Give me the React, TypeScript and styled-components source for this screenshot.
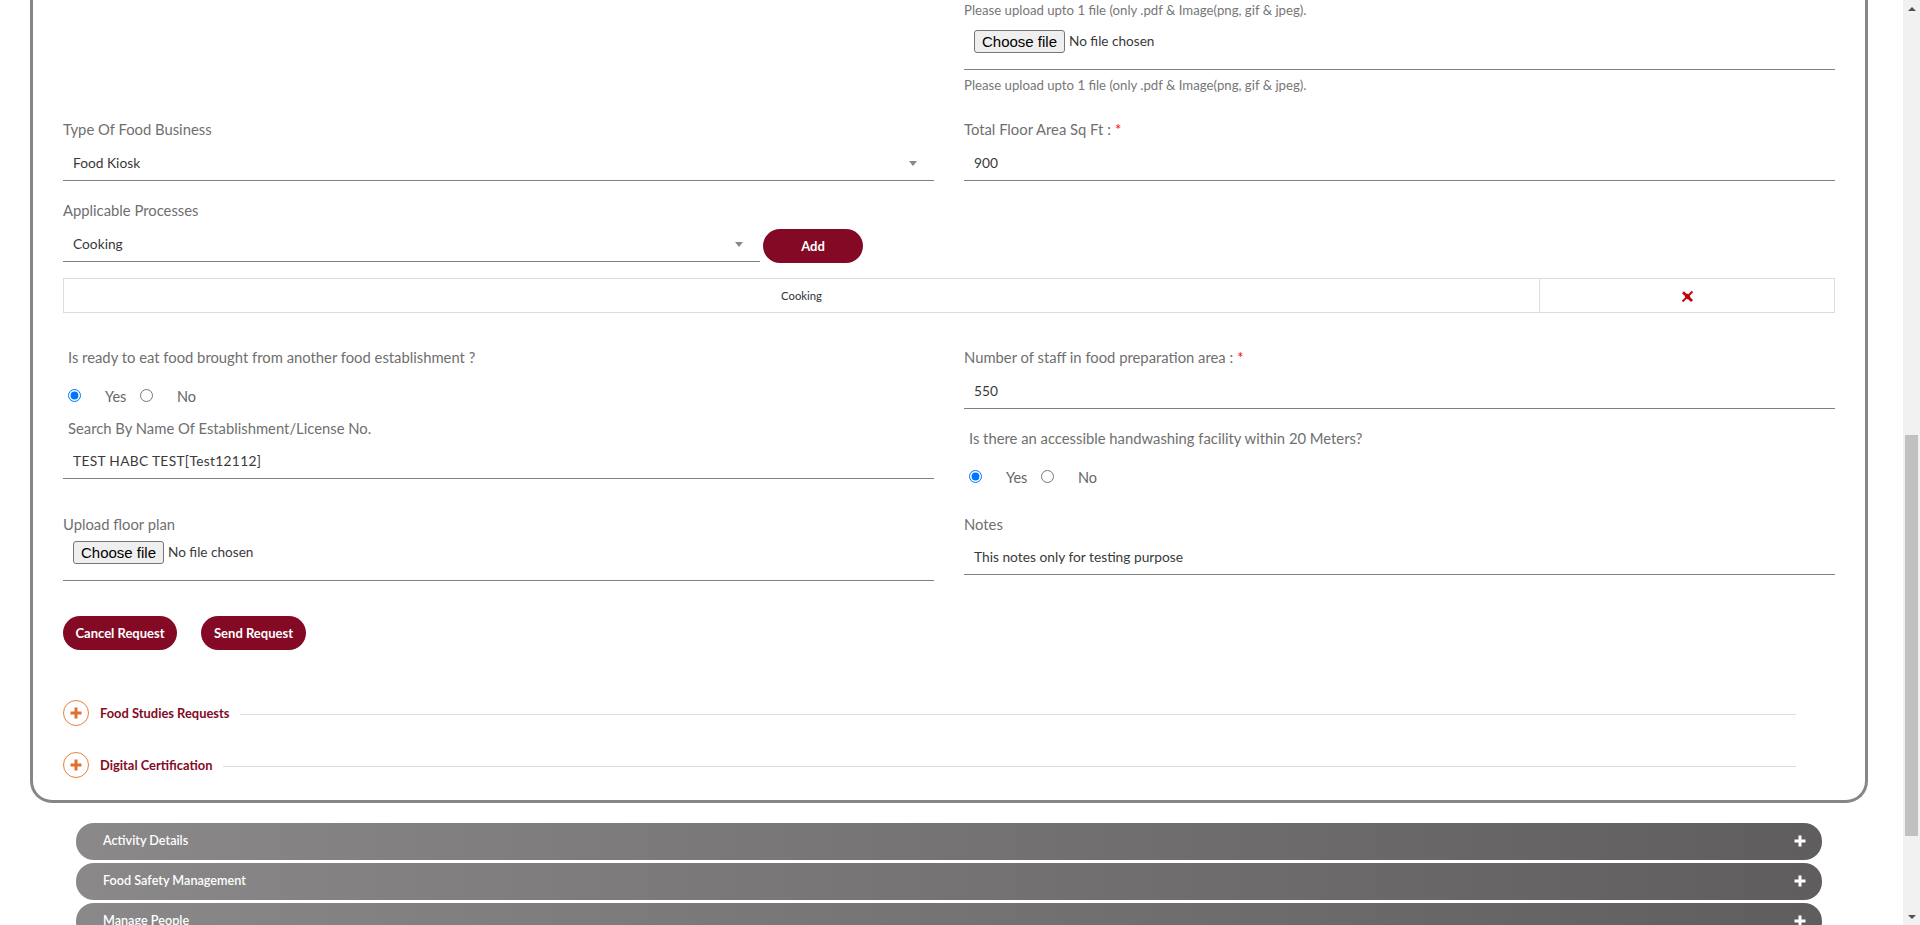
import React from "react";
import styled, { createGlobalStyle, css } from "styled-components";

const Global = createGlobalStyle`
  html, body { margin: 0; padding: 0; height: 925px; overflow: hidden; background: #fff; }
  * { box-sizing: border-box; }
  body { font-family: Lato, "Open Sans", sans-serif; font-size: 14px; }
`;

const Page = styled.div`
  display: flex;
  width: 1920px;
  height: 925px;
  overflow: hidden;
`;
const Content = styled.main`
  width: 1903px;
  height: 925px;
  overflow: hidden;
`;
const Scrollbar = styled.aside`
  width: 17px;
  height: 925px;
  background: #f1f1f1;
  display: flex;
  flex-direction: column;
  align-items: center;
  padding: 7px 0 6px;
`;
const ArrowUp = styled.span`
  width: 0; height: 0;
  border-left: 4px solid transparent;
  border-right: 4px solid transparent;
  border-bottom: 4px solid #505050;
`;
const ArrowDown = styled.span`
  width: 0; height: 0;
  border-left: 4px solid transparent;
  border-right: 4px solid transparent;
  border-top: 4px solid #505050;
`;
const Thumb = styled.span`
  width: 13px;
  height: 401px;
  margin: 424px 0 auto;
  background: #c1c1c1;
`;

const Panel = styled.section`
  margin: 0 35px 0 30px;
  height: 803px;
  border: 3px solid #868686;
  border-top: none;
  border-radius: 0 0 22px 22px;
  padding: 0 15px;
`;
const Row = styled.div<{ $top?: number }>`
  display: flex;
  margin-top: ${(p) => p.$top ?? 0}px;
`;
const Col = styled.div`
  width: 901px;
  padding: 0 15px;
`;
const Hint = styled.div<{ $top?: number }>`
  height: 20px;
  line-height: 20px;
  margin-top: ${(p) => p.$top ?? 0}px;
  font-size: 13.2px;
  color: #777;
`;
const Label = styled.label<{ $top?: number; $inset?: boolean; $nudge?: boolean }>`
  display: block;
  height: 20px;
  line-height: 19px;
  margin-top: ${(p) => p.$top ?? 0}px;
  margin-bottom: 1px;
  padding-top: ${(p) => (p.$nudge ? 1 : 0)}px;
  padding-left: ${(p) => (p.$inset ? 5 : 0)}px;
  font-size: 14.8px;
  color: #6f6f6f;
`;
const Required = styled.span`
  color: #f00;
  margin-left: 4px;
`;
const Control = styled.div<{ $track?: number }>`
  display: flex;
  justify-content: space-between;
  height: 40px;
  padding: 5px 17px 0 10px;
  line-height: 34px;
  font-size: 13.75px;
  letter-spacing: ${(p) => p.$track ?? 0}px;
  color: #3a3a3a;
  border-bottom: 1px solid #808080;
`;
const Caret = styled.span`
  width: 0; height: 0;
  margin-top: 15px;
  border-left: 4.5px solid transparent;
  border-right: 4.5px solid transparent;
  border-top: 5px solid #888;
`;
const SelectLine = styled.div`
  display: flex;
  gap: 3px;
  align-items: flex-start;
  padding-right: 71px;
`;
const Grow = styled.div`
  flex: 1;
`;
const Solid = styled.button<{ $w: number }>`
  width: ${(p) => p.$w}px;
  height: 34px;
  border: none;
  border-radius: 17px;
  padding: 0;
  background: #840924;
  color: #fff;
  font-family: Lato, sans-serif;
  font-size: 13px;
  font-weight: 700;
`;
const AddBtn = styled(Solid)`
  margin-top: 7px;
`;
const FileBox = styled.div<{ $h: number; $top: number }>`
  display: flex;
  align-items: flex-start;
  height: ${(p) => p.$h}px;
  padding: ${(p) => p.$top}px 0 0 10px;
  border-bottom: 1px solid #808080;
`;
const FileButton = styled.button`
  width: 91px;
  height: 23px;
  padding: 0;
  background: #efefef;
  border: 1px solid #767676;
  border-radius: 3px;
  color: #000;
  font-family: "Liberation Sans", Arial, sans-serif;
  font-size: 15px;
  line-height: 20px;
`;
const FileName = styled.span`
  margin-left: 4px;
  line-height: 23px;
  font-size: 13.6px;
  color: #3a3a3a;
`;
const TableWrap = styled.div`
  padding: 0 15px;
  margin-top: 15px;
`;
const Table = styled.table`
  width: 100%;
  height: 35px;
  border-collapse: collapse;
  table-layout: fixed;
`;
const Cell = styled.td<{ $w?: number }>`
  ${(p) => p.$w && css`width: ${p.$w}px;`}
  padding: 0;
  border: 1px solid #ddd;
  text-align: center;
  font-size: 11.3px;
  color: #333;
`;
const RemoveIcon = styled.svg`
  display: block;
  margin: 2px auto 0;
`;
const RadioRow = styled.div<{ $top: number }>`
  display: flex;
  align-items: center;
  height: 20px;
  margin-top: ${(p) => p.$top}px;
  padding-left: 5px;
`;
const Radio = styled.input.attrs({ type: "radio" })`
  width: 13px;
  height: 13px;
  margin: 0;
  position: relative;
  top: -1px;
`;
const RadioText = styled.span<{ $gap: number; $w?: number }>`
  margin-left: ${(p) => p.$gap}px;
  ${(p) => p.$w && css`width: ${p.$w}px;`}
  font-size: 14.5px;
  color: #666;
`;
const Actions = styled.div`
  display: flex;
  gap: 24px;
  margin-top: 35px;
  padding: 0 15px;
`;
const AccordionRow = styled.div<{ $top: number }>`
  display: flex;
  align-items: center;
  margin: ${(p) => p.$top}px 54px 0 15px;
`;
const Circle = styled.span`
  display: flex;
  align-items: center;
  justify-content: center;
  width: 26px;
  height: 26px;
  border: 1px solid #e57f3d;
  border-radius: 50%;
`;
const AccordionTitle = styled.span`
  margin-left: 11px;
  font-size: 12.9px;
  font-weight: 700;
  color: #840924;
`;
const Rule = styled.span`
  flex: 1;
  height: 1px;
  margin: 2px 0 0 11px;
  background: #ddd;
`;
const Bars = styled.div`
  display: flex;
  flex-direction: column;
  gap: 3px;
  margin: 20px 81px 0 76px;
`;
const Bar = styled.div`
  display: flex;
  align-items: center;
  justify-content: space-between;
  flex: none;
  height: 37px;
  padding: 0 16px 2px 27px;
  border-radius: 18px;
  background: linear-gradient(90deg, #8a8889, #5f5d5e);
  color: #fff;
  font-size: 12.65px;
  font-weight: 600;
`;

const Plus = ({ color }: { color: string }) => (
  <svg width="12" height="12" viewBox="0 0 12 12" aria-hidden="true">
    <path d="M4.5 0.5h3v4h4v3h-4v4h-3v-4h-4v-3h4z" fill={color} />
  </svg>
);

const FilePick = ({ h, top }: { h: number; top: number }) => (
  <FileBox $h={h} $top={top}>
    <FileButton type="button">Choose file</FileButton>
    <FileName>No file chosen</FileName>
  </FileBox>
);

const YesNo = ({ name, top }: { name: string; top: number }) => (
  <RadioRow $top={top}>
    <Radio name={name} defaultChecked />
    <RadioText $gap={24} $w={35}>Yes</RadioText>
    <Radio name={name} />
    <RadioText $gap={24}>No</RadioText>
  </RadioRow>
);

const bars = ["Activity Details", "Food Safety Management", "Manage People"];

export default function App() {
  return (
    <Page>
      <Global />
      <Content>
        <Panel>
          <Row>
            <Col />
            <Col>
              <Hint>Please upload upto 1 file (only .pdf &amp; Image(png, gif &amp; jpeg).</Hint>
              <FilePick h={50} top={10} />
              <Hint $top={5}>Please upload upto 1 file (only .pdf &amp; Image(png, gif &amp; jpeg).</Hint>
            </Col>
          </Row>
          <Row $top={25}>
            <Col>
              <Label>Type Of Food Business</Label>
              <Control>
                Food Kiosk
                <Caret />
              </Control>
            </Col>
            <Col>
              <Label>Total Floor Area Sq Ft :<Required>*</Required></Label>
              <Control>900</Control>
            </Col>
          </Row>
          <Row $top={20}>
            <Col>
              <Label>Applicable Processes</Label>
              <SelectLine>
                <Grow>
                  <Control>
                    Cooking
                    <Caret />
                  </Control>
                </Grow>
                <AddBtn $w={100}>Add</AddBtn>
              </SelectLine>
            </Col>
          </Row>
          <TableWrap>
            <Table>
              <tbody>
                <tr>
                  <Cell>Cooking</Cell>
                  <Cell $w={295}>
                    <RemoveIcon width="13" height="13" viewBox="0 0 13 13" aria-label="Remove">
                      <path d="M1.5 11.5L11.5 1.5" stroke="#c4000b" strokeWidth="1.8" fill="none" />
                      <path d="M2 2.2L11 11" stroke="#c4000b" strokeWidth="2.8" fill="none" />
                      <path d="M6.5 3.6L9.4 6.5 6.5 9.4 3.6 6.5z" fill="#c4000b" />
                    </RemoveIcon>
                  </Cell>
                </tr>
              </tbody>
            </Table>
          </TableWrap>
          <Row $top={35}>
            <Col>
              <Label $inset>Is ready to eat food brought from another food establishment ?</Label>
              <YesNo name="ready" top={18} />
              <Label $inset $nudge $top={12}>Search By Name Of Establishment/License No.</Label>
              <Control $track={0.32}>TEST HABC TEST[Test12112]</Control>
              <Label $nudge $top={35}>Upload floor plan</Label>
              <FilePick h={46} top={6} />
            </Col>
            <Col>
              <Label>Number of staff in food preparation area :<Required>*</Required></Label>
              <Control>550</Control>
              <Label $inset $top={20}>Is there an accessible handwashing facility within 20 Meters?</Label>
              <YesNo name="wash" top={18} />
              <Label $nudge $top={27}>Notes</Label>
              <Control>This notes only for testing purpose</Control>
            </Col>
          </Row>
          <Actions>
            <Solid $w={114}>Cancel Request</Solid>
            <Solid $w={105}>Send Request</Solid>
          </Actions>
          <AccordionRow $top={50}>
            <Circle><Plus color="#e2702c" /></Circle>
            <AccordionTitle>Food Studies Requests</AccordionTitle>
            <Rule />
          </AccordionRow>
          <AccordionRow $top={26}>
            <Circle><Plus color="#e2702c" /></Circle>
            <AccordionTitle>Digital Certification</AccordionTitle>
            <Rule />
          </AccordionRow>
        </Panel>
        <Bars>
          {bars.map((b) => (
            <Bar key={b}>
              {b}
              <Plus color="#fff" />
            </Bar>
          ))}
        </Bars>
      </Content>
      <Scrollbar>
        <ArrowUp />
        <Thumb />
        <ArrowDown />
      </Scrollbar>
    </Page>
  );
}
